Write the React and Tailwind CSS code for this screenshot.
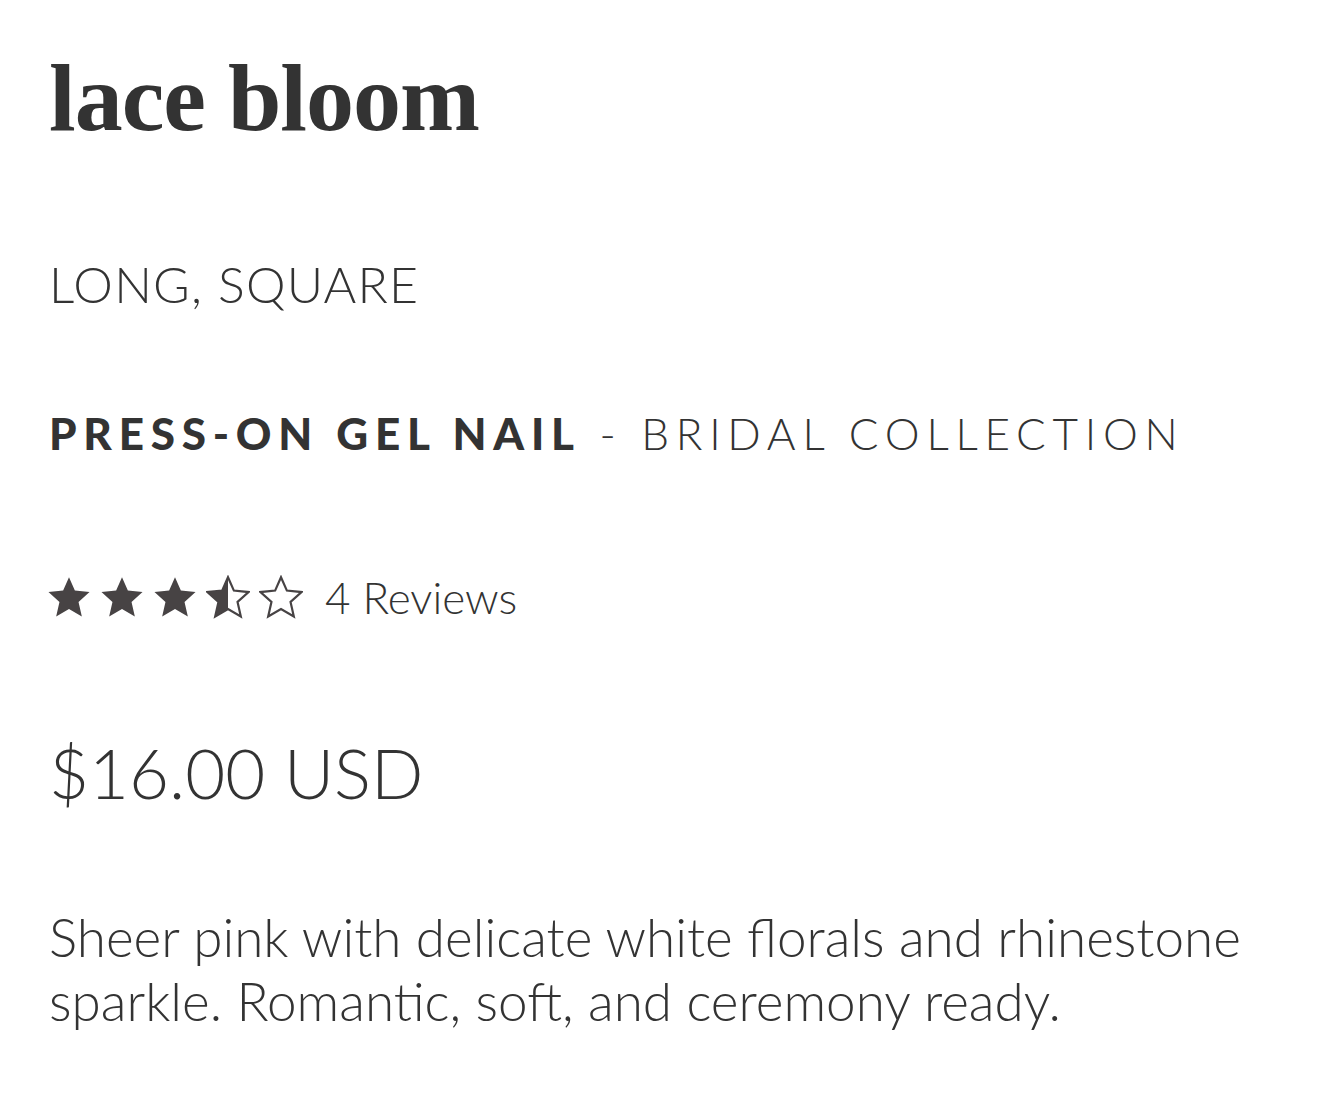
const STAR =
  'M12 1.2L15.2 8.5L23.2 9.3L17.2 14.7L19 22.6L12 18.6L5 22.6L6.8 14.7L0.8 9.3L8.8 8.5Z';

const Star = ({ fill, id }) => (
  <svg viewBox="0 0 24 24" className="w-[44px] h-[44px]">
    <defs>
      <clipPath id={id}>
        <rect x="0" y="0" width="12" height="24" />
      </clipPath>
    </defs>
    {fill === 'full' ? (
      <path d={STAR} fill="#474344" />
    ) : (
      <path d={STAR} fill="none" stroke="#474344" strokeWidth="1.2" strokeLinejoin="miter" />
    )}
    {fill === 'half' && <path d={STAR} fill="#474344" clipPath={`url(#${id})`} />}
  </svg>
);

export default function App() {
  const sans = { fontFamily: 'Lato, "Noto Sans", sans-serif' };
  return (
    <div className="min-h-screen bg-white text-[#333333] pl-[49px] pt-[43px]" style={sans}>
      <h1
        className="text-[96px] leading-[110px] font-bold tracking-[-1px]"
        style={{ fontFamily: '"Liberation Serif", serif' }}
      >
        lace bloom
      </h1>
      <p className="mt-[101px] text-[50px] leading-[60px] font-light tracking-[1.2px]">LONG, SQUARE</p>
      <p className="mt-[91px] text-[44px] leading-[56px] tracking-[6.75px]">
        <span className="font-black">PRESS-ON GEL NAIL</span>
        <span className="font-light"> - BRIDAL COLLECTION</span>
      </p>
      <div className="mt-[108px] flex items-center">
        <div className="flex items-center gap-[9px] -ml-[2px]">
          <Star fill="full" id="s1" />
          <Star fill="full" id="s2" />
          <Star fill="full" id="s3" />
          <Star fill="half" id="s4" />
          <Star fill="empty" id="s5" />
        </div>
        <span className="ml-[22px] text-[44px] leading-[56px] font-light">4 Reviews</span>
      </div>
      <p className="mt-[106px] text-[69px] leading-[84px] font-light">$16.00 USD</p>
      <p className="mt-[90px] text-[53px] leading-[64px] font-light max-w-[1240px]">
        Sheer pink with delicate white florals and rhinestone sparkle. Romantic, soft, and ceremony ready.
      </p>
    </div>
  );
}
